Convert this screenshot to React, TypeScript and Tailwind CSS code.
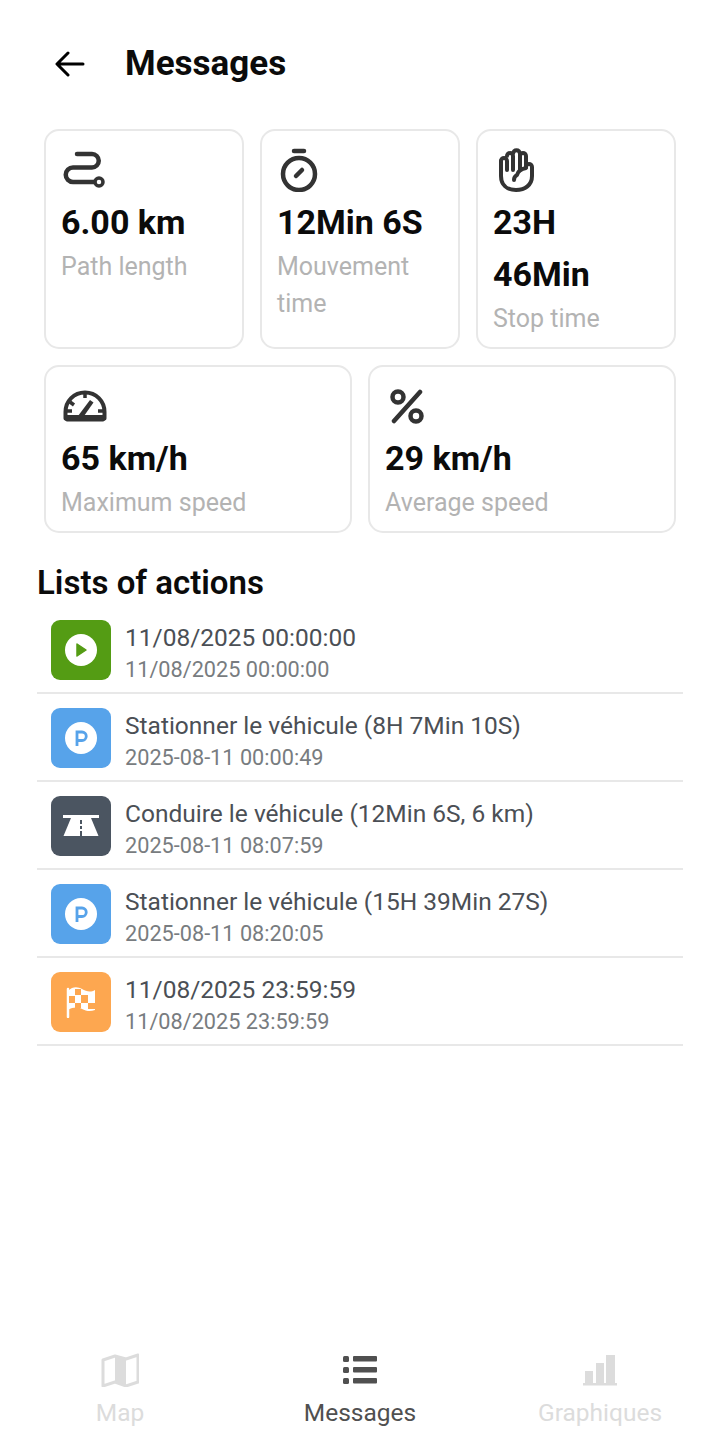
import type { ReactNode } from "react";

const PathIcon = () => (
  <svg width="44" height="38" viewBox="0 0 44 38" fill="none" stroke="#333" strokeWidth="4.500" strokeLinecap="round">
    <path d="M14 3h15a6.500 6.500 0 0 1 0 13.500H10a7.250 7.250 0 0 0 0 14.500H31" />
    <circle cx="36" cy="31" r="4" strokeWidth="3.500" fill="white" />
  </svg>
);

const TimerIcon = () => (
  <svg width="38" height="44" viewBox="0 0 38 44" fill="none" stroke="#333" strokeWidth="4.500" strokeLinecap="round">
    <path d="M14 3h10" />
    <circle cx="19" cy="26" r="16" />
    <path d="M16 28l6-6" />
  </svg>
);

const HandIcon = () => (
  <svg width="37" height="44" viewBox="0 0 37 44" fill="none" stroke="#333" strokeWidth="4" strokeLinecap="round" strokeLinejoin="round">
    <path d="M3 13v15c0 9 6 14 15 14s16-5 16-14V19c0-4-6-4-6 0" />
    <path d="M3 13c0-4 6-4 6 0v9M9 8c0-4 6-4 6 0v14M15 6c0-5 7-5 7 0v16M22 8c0-4 6-4 6 0v11" />
    <path d="M28 20c-5 1-8 3-9 7-2 1-3 3-3 5" />
  </svg>
);

const GaugeIcon = () => (
  <svg width="44" height="32" viewBox="0 0 44 32" fill="none">
    <path d="M22 2.500C11 2.500 2.500 11 2.500 22v6.500h39V22C41.500 11 33 2.500 22 2.500Z" stroke="#333" strokeWidth="4" strokeLinejoin="round" />
    <path d="M2 25h40v4.500c0 1-1 2-2 2H4c-1 0-2-1-2-2Z" fill="#333" />
    <path d="M22 3v5M7 12l4 3M2 21h7M35 21h7" stroke="#333" strokeWidth="3.500" />
    <path d="M15 26l12-16 3.500 2.500L21 26Z" fill="#333" />
  </svg>
);

const PercentIcon = () => (
  <svg width="34" height="35" viewBox="0 0 34 35" fill="none" stroke="#333" strokeWidth="4.500" strokeLinecap="round">
    <circle cx="8" cy="8" r="5.500" />
    <circle cx="26" cy="27" r="5.500" />
    <path d="M30 3L4 32" />
  </svg>
);

const StartGlyph = () => (
  <div className="flex h-8 w-8 items-center justify-center rounded-full bg-white">
    <svg width="14" height="16" viewBox="0 0 14 16">
      <path d="M3 2l9 6-9 6Z" fill="#549c14" stroke="#549c14" strokeWidth="1.500" strokeLinejoin="round" />
    </svg>
  </div>
);

const ParkGlyph = () => (
  <div className="flex h-8 w-8 items-center justify-center rounded-full bg-white">
    <svg width="14" height="16" viewBox="0 0 14 16" fill="none" stroke="#57a3ea" strokeWidth="2.800">
      <path d="M3 16V2h5a4 4 0 0 1 0 8.500H3" />
    </svg>
  </div>
);

const RoadGlyph = () => (
  <svg width="36" height="22" viewBox="0 0 36 22" fill="white">
    <path d="M0 0h36v3H0Z" />
    <path d="M8 3h20l7.500 18H.5Z" />
    <path d="M17 5h2v4h-2ZM17 11h2v3h-2ZM17 16h2v5h-2Z" fill="#4b5561" />
  </svg>
);

const FlagGlyph = () => (
  <svg width="30" height="32" viewBox="0 0 30 32">
    <path d="M2 3v28" stroke="white" strokeWidth="2.500" strokeLinecap="round" />
    <path d="M2 5c5-5 10-4 14-2s8 4 13 1v20c-5 2-9 1-13-1s-9-2-14 1Z" fill="white" />
    <path d="M9 3h6v6H9ZM3 10h6v7H3ZM15 9h7v8h-7ZM22 17h7v6h-7ZM9 17h6v5H9Z" fill="#fda750" />
  </svg>
);

const MapIcon = () => (
  <svg width="38" height="34" viewBox="0 0 38 34" fill="none">
    <path d="M14 2l11 4v28l-11-4Z" fill="#dcdcdc" />
    <path d="M14 3L2 7v26l12-4 11 4 12-4V2L25 6Z" stroke="#dcdcdc" strokeWidth="3" strokeLinejoin="round" />
  </svg>
);

const ListIcon = () => (
  <svg width="36" height="30" viewBox="0 0 36 30" fill="#505050">
    <rect x="1" y="1" width="6" height="6" rx="1.500" />
    <rect x="1" y="12" width="6" height="6" rx="1.500" />
    <rect x="1" y="23" width="6" height="6" rx="1.500" />
    <rect x="11" y="1" width="24" height="5.500" rx="1" />
    <rect x="11" y="12" width="24" height="5.500" rx="1" />
    <rect x="11" y="23" width="24" height="5.500" rx="1" />
  </svg>
);

const BarsIcon = () => (
  <svg width="36" height="32" viewBox="0 0 36 32" fill="#dcdcdc">
    <rect x="3" y="17" width="8" height="13" />
    <rect x="14" y="9" width="8" height="21" />
    <rect x="24" y="1" width="9" height="29" />
    <rect x="1" y="29" width="34" height="2.500" />
  </svg>
);

const StatCard = ({ icon, value, label, className, inset }: { icon: ReactNode; value: ReactNode; label: string; className: string; inset: string }) => (
  <div className={`rounded-[15px] border-2 border-[#e8e8e8] px-[15px] pt-[14px] ${className}`}>
    <div className={`flex h-[50px] items-center ${inset}`}>{icon}</div>
    <div className="mt-px text-[34px] leading-[52px] font-bold text-[#0b0b0b]">{value}</div>
    <div className="text-[25px] leading-[37px] text-[#b3b3b3]">{label}</div>
  </div>
);

const actions = [
  { title: "11/08/2025 00:00:00", sub: "11/08/2025 00:00:00", bg: "bg-[#549c14]", glyph: <StartGlyph /> },
  { title: "Stationner le véhicule (8H 7Min 10S)", sub: "2025-08-11 00:00:49", bg: "bg-[#57a3ea]", glyph: <ParkGlyph /> },
  { title: "Conduire le véhicule (12Min 6S, 6 km)", sub: "2025-08-11 08:07:59", bg: "bg-[#4b5561]", glyph: <RoadGlyph /> },
  { title: "Stationner le véhicule (15H 39Min 27S)", sub: "2025-08-11 08:20:05", bg: "bg-[#57a3ea]", glyph: <ParkGlyph /> },
  { title: "11/08/2025 23:59:59", sub: "11/08/2025 23:59:59", bg: "bg-[#fda750]", glyph: <FlagGlyph /> },
];

const NavItem = ({ icon, label, active }: { icon: ReactNode; label: string; active?: boolean }) => (
  <div className="flex w-[240px] flex-col items-center">
    <div className="flex h-[34px] items-center">{icon}</div>
    <div className={`mt-[10px] text-[24.500px] leading-[32px] ${active ? "text-[#505050]" : "text-[#dcdcdc]"}`}>{label}</div>
  </div>
);

export default function App() {
  return (
    <div className="flex h-[1440px] w-[720px] flex-col overflow-hidden bg-white font-['Roboto',sans-serif]">
      <div className="flex items-center pt-[41px] pl-[55px]">
        <svg width="30" height="26" viewBox="0 0 30 26" fill="none" stroke="#000" strokeWidth="3" strokeLinecap="round" strokeLinejoin="round">
          <path d="M28 13H3M13 2L2 13l11 11" />
        </svg>
        <h1 className="ml-[40px] text-[35px] leading-[46px] font-bold text-[#0b0b0b]">Messages</h1>
      </div>

      <div className="mt-[42px] flex flex-col gap-[16px] px-[44px]">
        <div className="grid grid-cols-3 gap-[16px]">
          <StatCard className="h-[220px]" inset="ml-0.5" icon={<PathIcon />} value="6.00 km" label="Path length" />
          <StatCard className="h-[220px]" inset="ml-[3px]" icon={<TimerIcon />} value="12Min 6S" label="Mouvement time" />
          <StatCard className="h-[220px]" inset="ml-[5px]" icon={<HandIcon />} value={<>23H<br />46Min</>} label="Stop time" />
        </div>
        <div className="grid grid-cols-2 gap-[16px]">
          <StatCard className="h-[168px]" inset="ml-0.5" icon={<GaugeIcon />} value="65 km/h" label="Maximum speed" />
          <StatCard className="h-[168px]" inset="ml-[5px]" icon={<PercentIcon />} value="29 km/h" label="Average speed" />
        </div>
      </div>

      <div className="mt-[28px] px-[37px]">
        <h2 className="text-[33px] leading-[44px] font-semibold text-[#0b0b0b]">Lists of actions</h2>
        <ul className="mt-px">
          {actions.map((a, i) => (
            <li key={i} className="flex h-[88px] items-center border-b-2 border-[#e8e8e8] pt-[2px] pl-[14px]">
              <div className={`flex h-[60px] w-[60px] shrink-0 items-center justify-center rounded-[9px] ${a.bg}`}>{a.glyph}</div>
              <div className="ml-[14px] pt-[6px]">
                <div className="text-[24.500px] leading-[34px] text-[#4b4f55]">{a.title}</div>
                <div className="text-[21.700px] leading-[30px] text-[#787c80]">{a.sub}</div>
              </div>
            </li>
          ))}
        </ul>
      </div>

      <div className="mt-auto flex pb-[11px]">
        <NavItem icon={<MapIcon />} label="Map" />
        <NavItem icon={<ListIcon />} label="Messages" active />
        <NavItem icon={<BarsIcon />} label="Graphiques" />
      </div>
    </div>
  );
}
